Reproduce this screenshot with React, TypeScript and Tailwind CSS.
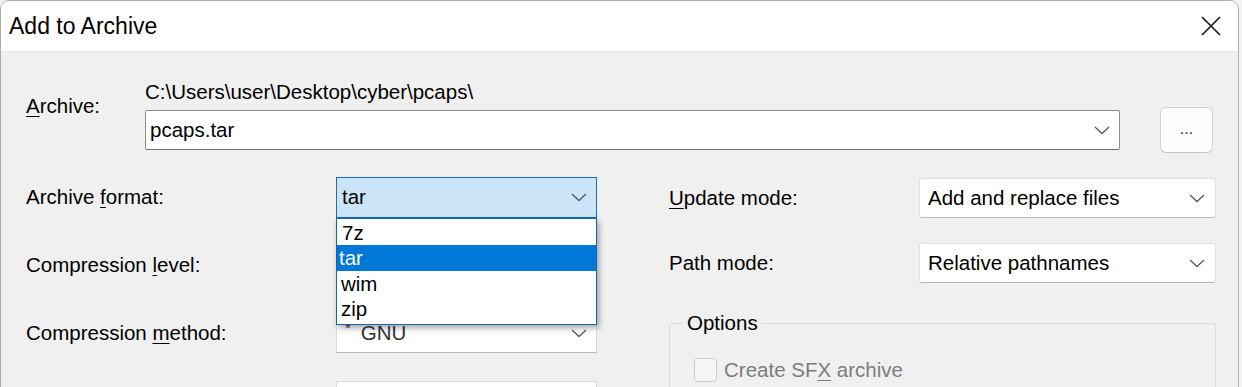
import React from "react";

const Chevron = () => (
  <svg width="16" height="9" viewBox="0 0 16 9" className="shrink-0">
    <path d="M1 1 L8 7.5 L15 1" fill="none" stroke="#5a5a5a" strokeWidth="1.3" />
  </svg>
);

const U = ({ children }: { children: React.ReactNode }) => (
  <span className="underline decoration-1 underline-offset-[3px]">{children}</span>
);

const Combo = ({
  children,
  className = "",
}: {
  children?: React.ReactNode;
  className?: string;
}) => (
  <div className={`flex items-center justify-between h-[40px] ${className}`}>
    <div className="flex items-center">{children}</div>
    <Chevron />
  </div>
);

export default function App() {
  return (
    <div
      className="w-[1242px] h-[387px] overflow-hidden bg-[#f3f3f3] text-black"
      style={{ fontFamily: '"Liberation Sans", Arial, sans-serif' }}
    >
      <div className="w-[1239px] h-[430px] rounded-t-[9px] border border-[#adadad] bg-[#f0f0f0] overflow-hidden flex flex-col">
        {/* Title bar */}
        <div className="h-[51px] shrink-0 bg-white border-b border-[#e8e8e8] flex items-center justify-between pl-[8px] pr-[17px]">
          <span className="text-[23px] leading-[28px]">Add to Archive</span>
          <svg width="20" height="20" viewBox="0 0 20 20">
            <path d="M1 1 L19 19 M19 1 L1 19" stroke="#1b1b1b" strokeWidth="1.7" />
          </svg>
        </div>

        {/* Body */}
        <div className="pl-[25px] pt-[28px] text-[20.5px] leading-[24px]">
          {/* Archive row */}
          <div className="flex">
            <div className="w-[119px] pt-[14px]">
              <U>A</U>rchive:
            </div>
            <div className="flex flex-col">
              <div className="h-[24px]">C:\Users\user\Desktop\cyber\pcaps\</div>
              <div className="mt-[3px] h-[46px] flex items-center">
                <div className="w-[975px] h-[40px] bg-white border border-[#8d8d8d] border-b-[#6f6f6f] rounded-[2px] flex items-center justify-between pl-[4px] pr-[9px]">
                  <span>pcaps.tar</span>
                  <Chevron />
                </div>
                <div className="ml-[40px] w-[53px] h-[46px] rounded-[6px] bg-[#fdfdfd] border border-[#d3d3d3] border-b-[#c2c2c2] flex items-center justify-center text-[16px] text-[#333] pb-[2px]">
                  ...
                </div>
              </div>
            </div>
          </div>

          {/* Grid rows */}
          <div className="mt-[24px] flex">
            {/* Left column */}
            <div className="w-[572px] flex flex-col gap-[28px]">
              <div className="flex items-center h-[40px]">
                <div className="w-[310px]">
                  Archive <U>f</U>ormat:
                </div>
                <div className="relative w-[261px] h-[41px]">
                  <Combo className="h-[41px] bg-[#cce4f7] border border-[#1a6fb5] pl-[5px] pr-[9px]">
                    <span>tar</span>
                  </Combo>
                  <div className="absolute left-0 top-[41px] w-[261px] bg-white border border-[#1565ad] shadow-[2px_3px_6px_rgba(0,0,0,0.35)] z-10 py-[1px] leading-[26px]">
                    <div className="h-[25px] pl-[5px] leading-[25px]">7z</div>
                    <div className="h-[26px] pl-[2px] bg-[#0078d7] text-white">tar</div>
                    <div className="h-[26px] pl-[4px]">wim</div>
                    <div className="h-[26px] pl-[4px] leading-[24px]">zip</div>
                  </div>
                </div>
              </div>
              <div className="flex items-center h-[40px]">
                <div className="w-[310px]">
                  Compression <U>l</U>evel:
                </div>
                <Combo className="w-[261px] bg-white border border-[#dadada] border-b-[#b5b5b5] pl-[6px] pr-[9px]" />
              </div>
              <div className="flex items-center h-[40px]">
                <div className="w-[310px]">
                  Compression <U>m</U>ethod:
                </div>
                <Combo className="w-[261px] bg-white border border-[#dadada] border-b-[#b5b5b5] pl-[8px] pr-[9px]">
                  <span className="text-[15px] leading-[15px] mb-[12px] text-[#333]">*</span>
                  <span className="ml-[10px] text-[#333]">GNU</span>
                </Combo>
              </div>
              <div className="flex items-center h-[40px]">
                <div className="w-[310px]" />
                <Combo className="w-[261px] bg-white border border-[#dadada] border-b-[#b5b5b5] pl-[6px] pr-[9px]" />
              </div>
            </div>

            {/* Right column */}
            <div className="ml-[71px] w-[547px] pt-[1px] flex flex-col">
              <div className="flex items-center h-[40px]">
                <div className="w-[250px]">
                  <U>U</U>pdate mode:
                </div>
                <Combo className="w-[297px] bg-white border border-[#e0e0e0] border-b-[#b8b8b8] rounded-[3px] pl-[8px] pr-[10px]">
                  <span>Add and replace files</span>
                </Combo>
              </div>
              <div className="mt-[25px] flex items-center h-[40px]">
                <div className="w-[250px]">Path mode:</div>
                <Combo className="w-[297px] bg-white border border-[#e0e0e0] border-b-[#b8b8b8] rounded-[3px] pl-[8px] pr-[10px]">
                  <span>Relative pathnames</span>
                </Combo>
              </div>
              <fieldset className="mt-[28px] border border-[#dcdcdc] rounded-[3px] h-[140px]">
                <legend className="ml-[13px] px-[4px] leading-[24px]">Options</legend>
                <div className="mt-[23px] pl-[24px] flex items-center">
                  <div className="w-[23px] h-[24px] rounded-[4px] border border-[#cdcdcd] bg-[#f6f6f6]" />
                  <span className="ml-[7px] text-[#7d7d7d]">
                    Create SF<U>X</U> archive
                  </span>
                </div>
              </fieldset>
            </div>
          </div>
        </div>
      </div>
    </div>
  );
}
